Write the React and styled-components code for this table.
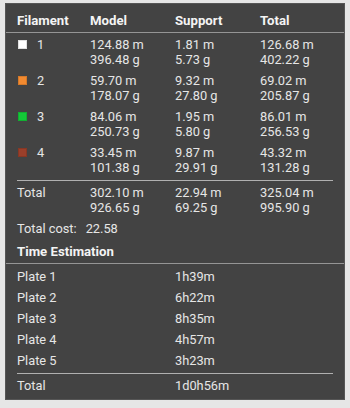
import React from 'react';
import styled, { createGlobalStyle } from 'styled-components';

const GlobalStyle = createGlobalStyle`
  body {
    margin: 0;
    background: #e6e6e6;
    font-family: Roboto, 'Noto Sans', 'Liberation Sans', sans-serif;
  }
`;

const Panel = styled.div`
  box-sizing: border-box;
  margin: 3px 0 0 5px;
  width: 340px;
  height: 397px;
  background: #434343;
  border: 1px solid #565656;
  color: #e6e6e6;
  font-size: 12.8px;
  line-height: 15px;
`;

const Grid = styled.div`
  display: grid;
  grid-template-columns: 73px 85px 85px 1fr;
  padding: 0 11px;
`;

const HeadRow = styled(Grid)`
  padding-top: 9px;
  padding-bottom: 4px;
  border-bottom: 1px solid #959595;
  font-size: 13.2px;
  font-weight: 700;
  color: #f4f4f4;
`;

const Row = styled(Grid)`
  padding-top: ${p => p.$top ?? 6}px;
`;

const Cell = styled.div`
  display: flex;
  flex-direction: column;
`;

const FilCell = styled.div`
  display: flex;
  align-items: flex-start;
  gap: 10px;
`;

const Swatch = styled.span`
  width: 9px;
  height: 9px;
  margin: 3px 0 0 1px;
  background: ${p => p.$color};
  box-shadow: inset 0 0 0 1px rgba(0, 0, 0, 0.12);
`;

const Rule = styled.div`
  margin: 5px 11px 4px;
  height: 1px;
  background: #b0b0b0;
`;

const Cost = styled.div`
  display: flex;
  gap: 9px;
  padding: 6px 11px 0;
`;

const Section = styled.div`
  padding: 8px 11px 4px;
  border-bottom: 1px solid #959595;
  font-size: 13.2px;
  font-weight: 700;
  color: #f4f4f4;
`;

const TimeRow = styled.div`
  display: grid;
  grid-template-columns: 158px 1fr;
  padding: ${p => p.$top ?? 6}px 11px 0;
`;

const filaments = [
  { id: 1, color: '#ffffff', model: ['124.88 m', '396.48 g'], support: ['1.81 m', '5.73 g'], total: ['126.68 m', '402.22 g'] },
  { id: 2, color: '#f28a30', model: ['59.70 m', '178.07 g'], support: ['9.32 m', '27.80 g'], total: ['69.02 m', '205.87 g'] },
  { id: 3, color: '#14c838', model: ['84.06 m', '250.73 g'], support: ['1.95 m', '5.80 g'], total: ['86.01 m', '256.53 g'] },
  { id: 4, color: '#9a3f2a', model: ['33.45 m', '101.38 g'], support: ['9.87 m', '29.91 g'], total: ['43.32 m', '131.28 g'] },
];

const plates = [
  ['Plate 1', '1h39m'],
  ['Plate 2', '6h22m'],
  ['Plate 3', '8h35m'],
  ['Plate 4', '4h57m'],
  ['Plate 5', '3h23m'],
];

const Pair = ({ v }) => (
  <Cell>
    <span>{v[0]}</span>
    <span>{v[1]}</span>
  </Cell>
);

export default function App() {
  return (
    <>
      <GlobalStyle />
      <Panel>
        <HeadRow>
          <div>Filament</div>
          <div>Model</div>
          <div>Support</div>
          <div>Total</div>
        </HeadRow>
        {filaments.map((f, i) => (
          <Row key={f.id} $top={i === 0 ? 4 : 6}>
            <FilCell>
              <Swatch $color={f.color} />
              <span>{f.id}</span>
            </FilCell>
            <Pair v={f.model} />
            <Pair v={f.support} />
            <Pair v={f.total} />
          </Row>
        ))}
        <Rule />
        <Row $top={0}>
          <div>Total</div>
          <Pair v={['302.10 m', '926.65 g']} />
          <Pair v={['22.94 m', '69.25 g']} />
          <Pair v={['325.04 m', '995.90 g']} />
        </Row>
        <Cost>
          <span>Total cost:</span>
          <span>22.58</span>
        </Cost>
        <Section>Time Estimation</Section>
        {plates.map(([name, t], i) => (
          <TimeRow key={name} $top={i === 0 ? 5 : 6}>
            <span>{name}</span>
            <span>{t}</span>
          </TimeRow>
        ))}
        <Rule />
        <TimeRow $top={0}>
          <span>Total</span>
          <span>1d0h56m</span>
        </TimeRow>
      </Panel>
    </>
  );
}
